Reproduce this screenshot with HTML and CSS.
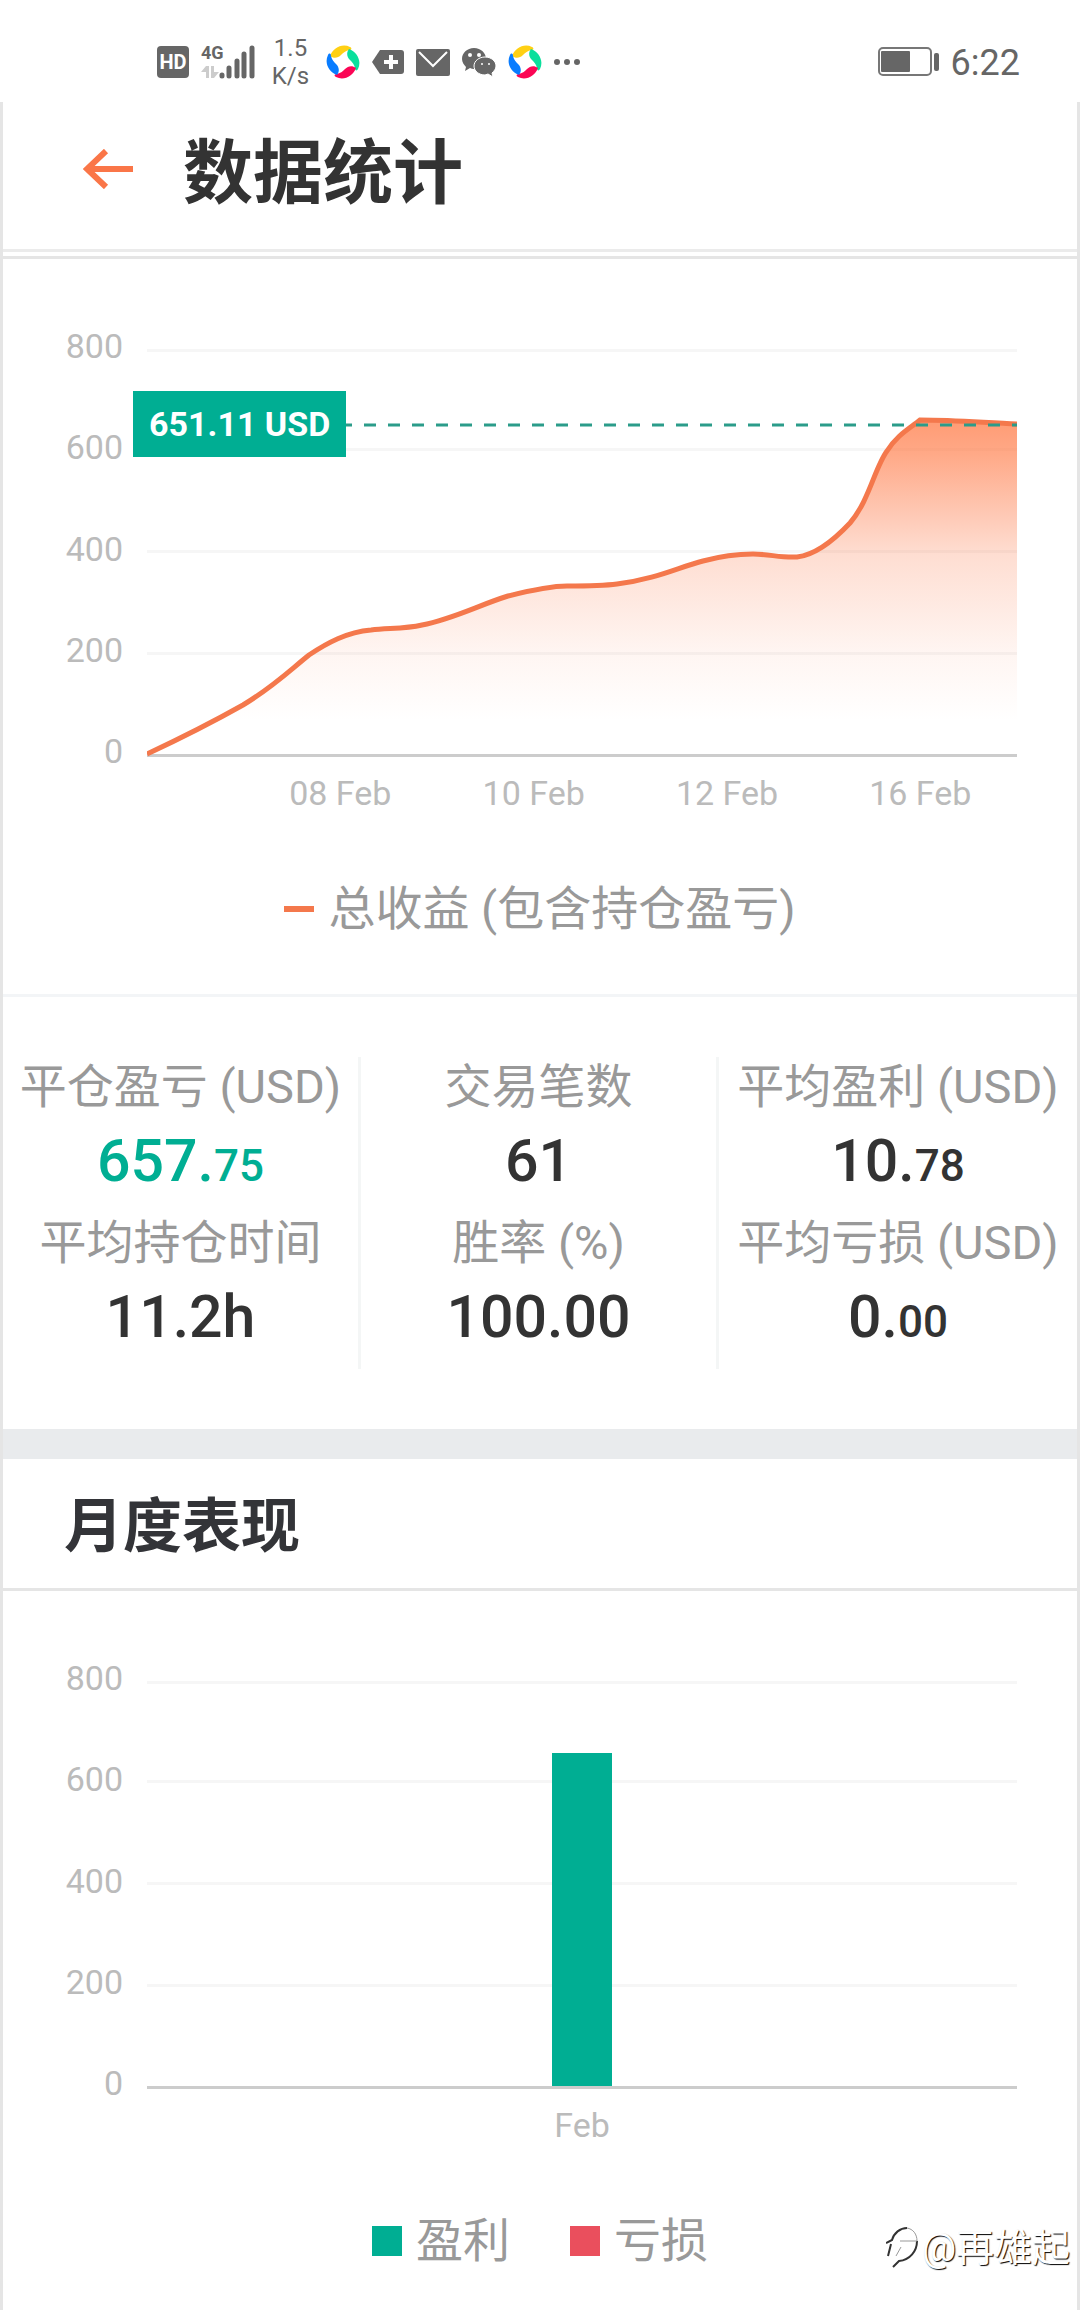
FILE: index.html
```html
<!DOCTYPE html>
<html lang="zh-CN">
<head>
  <meta charset="UTF-8" />
  <meta name="viewport" content="width=device-width, initial-scale=1.0"/>
  <title>数据统计</title>
  <link rel="stylesheet" href="styles.css">
</head>
<body>
  <svg width="0" height="0" class="sprite" aria-hidden="true">
    <symbol id="swirl" viewBox="0 0 36 36">
      <path fill="#ffd014" d="M5 12 C8 4 17 -1 25 3 C27 4 27 6 24 6 C20 7 18 9 16 11 C13 14 9 15 5 12 Z"/>
      <path fill="#0adf9c" d="M24 5 C32 8 37 17 33 25 C32 27 30 27 30 24 C29 20 27 18 25 16 C22 13 21 9 24 5 Z"/>
      <path fill="#fb0655" d="M31 24 C28 32 19 37 11 33 C9 32 9 30 12 30 C16 29 18 27 20 25 C23 22 27 21 31 24 Z"/>
      <path fill="#087cff" d="M12 31 C4 28 -1 19 3 11 C4 9 6 9 6 12 C7 16 9 18 11 20 C14 23 15 27 12 31 Z"/>
    </symbol>
  </svg>

  <div class="status-bar">
    <div class="status-left">
      <svg width="32" height="32" viewBox="0 0 32 32">
        <rect width="32" height="32" rx="4" fill="#666"/>
        <text x="16" y="23" text-anchor="middle" class="hd-text">HD</text>
      </svg>
      <svg width="54" height="46" viewBox="0 -6 54 46">
        <text x="0" y="14" class="net-text">4G</text>
        <path fill="#ccc" d="M0 27 L5 21 L8 21 L8 33 L5 33 L5 27 Z M10 21 L13 21 L13 27 L18 27 L13 33 L10 33 Z"/>
        <g stroke="#666" stroke-width="5" stroke-linecap="round">
          <path d="M21 30 V31 M28 23 V31 M36 16 V31 M43 9 V31 M51 3 V31"/>
        </g>
      </svg>
      <div class="speed">1.5<br>K/s</div>
      <svg class="app" width="36" height="36"><use href="#swirl"/></svg>
      <svg width="32" height="24" viewBox="0 0 32 24">
        <path fill="#666" d="M8 0 H29 Q32 0 32 3 V21 Q32 24 29 24 H8 L0 12 Z"/>
        <path stroke="#fff" stroke-width="4" d="M12 12 H26 M19 5 V19"/>
      </svg>
      <svg width="34" height="27" viewBox="0 0 34 27">
        <rect width="34" height="27" rx="2" fill="#666"/>
        <path fill="none" stroke="#fff" stroke-width="2" d="M3 3 L17 17 L31 3"/>
      </svg>
      <svg width="34" height="30" viewBox="0 0 34 30">
        <path fill="#666" d="M12 1 C5 1 0 6 0 12 C0 15 2 18 4 20 L3 24 L8 21 Q10 22 12 22 C19 22 24 17 24 12 C24 6 19 1 12 1 Z"/>
        <path fill="#666" stroke="#fff" stroke-width="1" d="M23 10 C17 10 12 14 12 19 C12 24 17 28 23 28 L26 27 L31 30 L30 26 C32 24 34 22 34 19 C34 14 29 10 23 10 Z"/>
        <g fill="#fff"><circle cx="8" cy="8" r="2"/><circle cx="17" cy="8" r="2"/><circle cx="20" cy="17" r="1"/><circle cx="27" cy="17" r="1"/></g>
      </svg>
      <svg class="app" width="36" height="36"><use href="#swirl"/></svg>
      <svg width="26" height="6" viewBox="0 0 26 6" fill="#666">
        <circle cx="3" cy="3" r="3"/><circle cx="13" cy="3" r="3"/><circle cx="23" cy="3" r="3"/>
      </svg>
    </div>
    <div class="status-right">
      <svg width="61" height="30" viewBox="0 0 61 30">
        <rect x="1" y="1" width="52" height="27" rx="4" fill="none" stroke="#777" stroke-width="2"/>
        <rect x="3" y="4" width="29" height="21" rx="1" fill="#666"/>
        <rect x="56" y="6" width="5" height="18" rx="2" fill="#666"/>
      </svg>
      <span class="clock">6:22</span>
    </div>
  </div>

  <main class="page">
    <header class="page-header">
      <button class="back-btn" aria-label="返回">
        <svg width="50" height="40" viewBox="0 0 50 40">
          <path fill="none" stroke="#fa7648" stroke-width="6" d="M50 20 H4 M23 2 L4 20 L23 38"/>
        </svg>
      </button>
      <h1>数据统计</h1>
    </header>

    <section class="profit">
      <div class="chart">
        <div class="y-axis">
          <span>800</span><span>600</span><span>400</span><span>200</span><span>0</span>
        </div>
        <div class="plot">
          <svg viewBox="0 0 870 408" preserveAspectRatio="none">
            <defs>
              <linearGradient id="fade" x1="0" y1="0" x2="0" y2="1">
                <stop offset="0" stop-color="#ff7843" stop-opacity="0.74"/>
                <stop offset="0.1" stop-color="#ff7843" stop-opacity="0.64"/>
                <stop offset="0.4" stop-color="#fb7848" stop-opacity="0.25"/>
                <stop offset="0.7" stop-color="#fb7848" stop-opacity="0.07"/>
                <stop offset="0.9" stop-color="#fb7848" stop-opacity="0"/>
              </linearGradient>
            </defs>
            <path class="grid-line" d="M0 0 H870 V3 H0 Z M0 99 H870 V102 H0 Z M0 201 H870 V204 H0 Z M0 303 H870 V306 H0 Z"/>
            <path fill="url(#fade)" d="M0 405 C32 390 64 374 96 356 C126 338 142 322 162 306 C180 294 200 283 224 281 C242 279 258 280 275 276 C306 270 332 256 361 247 C385 241 405 237 420 237 C440 237 455 237 470 235 C510 230 532 218 556 212 C578 206 592 205 606 205 C622 205 634 209 650 208 C668 206 688 190 703 174 C722 152 728 118 740 102 C750 86 762 80 773 71 C810 71 840 74 870 75 V405 Z"/>
            <path class="axis-line" d="M0 405 H870 V408 H0 Z"/>
            <path class="profit-line" d="M0 405 C32 390 64 374 96 356 C126 338 142 322 162 306 C180 294 200 283 224 281 C242 279 258 280 275 276 C306 270 332 256 361 247 C385 241 405 237 420 237 C440 237 455 237 470 235 C510 230 532 218 556 212 C578 206 592 205 606 205 C622 205 634 209 650 208 C668 206 688 190 703 174 C722 152 728 118 740 102 C750 86 762 80 773 71 C810 71 840 74 870 75"/>
            <path class="current-line" d="M1 76 H870"/>
          </svg>
          <div class="current-tag">651.11 USD</div>
          <div class="x-axis">
            <span>08 Feb</span><span>10 Feb</span><span>12 Feb</span><span>16 Feb</span>
          </div>
        </div>
      </div>
      <div class="legend">
        <span class="legend-item"><i class="dash"></i>总收益 (包含持仓盈亏)</span>
      </div>
    </section>

    <section class="stats">
      <dl>
        <dt>平仓盈亏 (USD)</dt>
        <dd class="win">657.<small>75</small></dd>
        <dt>平均持仓时间</dt>
        <dd>11.2h</dd>
      </dl>
      <dl>
        <dt>交易笔数</dt>
        <dd>61</dd>
        <dt>胜率 (%)</dt>
        <dd>100.00</dd>
      </dl>
      <dl>
        <dt>平均盈利 (USD)</dt>
        <dd>10.<small>78</small></dd>
        <dt>平均亏损 (USD)</dt>
        <dd>0.<small>00</small></dd>
      </dl>
    </section>

    <section class="monthly">
      <h2>月度表现</h2>
      <div class="chart">
        <div class="y-axis">
          <span>800</span><span>600</span><span>400</span><span>200</span><span>0</span>
        </div>
        <div class="plot">
          <svg viewBox="0 0 870 408" preserveAspectRatio="none">
            <path class="grid-line" d="M0 0 H870 V3 H0 Z M0 99 H870 V102 H0 Z M0 201 H870 V204 H0 Z M0 303 H870 V306 H0 Z"/>
            <rect x="405" y="72" width="60" height="333" fill="#00ae93"/>
            <path class="axis-line" d="M0 405 H870 V408 H0 Z"/>
          </svg>
          <div class="x-axis single"><span>Feb</span></div>
        </div>
      </div>
      <div class="legend">
        <span class="legend-item"><i class="box green"></i>盈利</span>
        <span class="legend-item"><i class="box red"></i>亏损</span>
      </div>
    </section>

    <div class="watermark">
      <svg width="36" height="42" viewBox="0 0 36 42" fill="none">
        <path stroke="#333" stroke-width="2" d="M0 16 L6 13 C8 6 14 1 21 1 M5 17 L2 29 M31 14 C31 24 24 33 13 34 L7 40"/>
        <path stroke="#999" stroke-width="1" d="M21 1 C27 2 31 7 31 14 H14 M15 20 L10 29"/>
      </svg>
      <span>@再雄起</span>
    </div>
  </main>
</body>
</html>
```
FILE: styles.css
```css
:root {
  --green: #00ae93;
  --red: #ea4f5d;
  --orange: #f4784c;
  --text: #333;
  --label: #999;
  --axis: #bbb;
  --line: #e5e5e5;
}

* {
  box-sizing: border-box;
}

body {
  margin: 0;
  min-height: 100vh;
  display: flex;
  flex-direction: column;
  font-family: Roboto, "Noto Sans CJK SC", sans-serif;
  color: var(--text);
  background: #fff;
}

h1, h2, dl, dd {
  margin: 0;
}

svg {
  display: block;
}

.sprite {
  position: absolute;
}

/* status bar */
.status-bar {
  height: 102px;
  padding: 22px 60px 0 157px;
  display: flex;
  justify-content: space-between;
  align-items: center;
  color: #666;
}

.status-left, .status-right {
  display: flex;
  align-items: center;
  gap: 12px;
}

.app {
  margin: 0 -1px;
}

.hd-text {
  font: 700 20px Roboto, sans-serif;
  fill: #fff;
}

.net-text {
  font: 700 18px Roboto, sans-serif;
  fill: #666;
}

.speed {
  width: 47px;
  text-align: center;
  font-size: 24px;
  line-height: 28px;
}

.clock {
  padding-top: 2px;
  font-size: 36px;
  line-height: 40px;
}

/* page */
.page {
  flex: 1;
  position: relative;
  border: solid var(--line);
  border-width: 0 3px;
}

.page-header {
  height: 150px;
  padding: 0 80px 14px;
  display: flex;
  align-items: center;
  gap: 50px;
  border-bottom: 3px solid #ebebeb;
}

.back-btn {
  padding: 0;
  border: none;
  background: none;
  cursor: pointer;
}

h1 {
  padding-top: 10px;
  font-size: 70px;
  line-height: 80px;
  font-weight: 700;
}

.profit {
  margin-top: 4px;
  padding-bottom: 55px;
  border-top: 3px solid var(--line);
  border-bottom: 3px solid #f3f5f7;
}

/* charts */
.chart {
  display: flex;
  padding: 69px 60px 0 0;
  font-size: 34px;
  line-height: 36px;
  color: var(--axis);
}

.y-axis {
  width: 144px;
  height: 441px;
  padding-right: 24px;
  display: flex;
  flex-direction: column;
  justify-content: space-between;
  text-align: right;
}

.plot {
  flex: 1;
  position: relative;
  padding-top: 21px;
}

.plot svg {
  width: 100%;
  height: 408px;
}

.grid-line {
  fill: #f6f6f6;
}

.axis-line {
  fill: #ccc;
}

.profit-line {
  fill: none;
  stroke: var(--orange);
  stroke-width: 5;
}

.current-line {
  stroke: #2b9c8a;
  stroke-width: 3;
  stroke-dasharray: 12 12;
}

.current-tag {
  position: absolute;
  top: 63px;
  left: -14px;
  padding: 0 16px;
  line-height: 66px;
  font-weight: 700;
  color: #fff;
  background: var(--green);
}

.x-axis {
  margin-top: 18px;
  display: grid;
  grid-template-columns: repeat(9, 1fr);
  text-align: center;
}

.x-axis span {
  grid-column: span 2;
}

.x-axis span:first-child {
  grid-column: 2 / span 2;
}

.x-axis.single {
  display: block;
}

.legend {
  margin-top: 68px;
  display: flex;
  justify-content: center;
  gap: 60px;
  font-size: 47px;
  line-height: 60px;
  color: var(--label);
}

.legend-item {
  display: flex;
  align-items: center;
  gap: 14px;
}

.dash {
  width: 30px;
  height: 6px;
  background: var(--orange);
}

.box {
  width: 30px;
  height: 30px;
}

.green {
  background: var(--green);
}

.red {
  background: var(--red);
}

/* stats */
.stats {
  display: grid;
  grid-template-columns: repeat(3, 1fr);
  padding: 60px 0;
  text-align: center;
}

.stats dl {
  border-right: 3px solid #f4f6f6;
}

.stats dl:last-child {
  border-right: none;
}

.stats dt {
  font-size: 47px;
  line-height: 60px;
  color: var(--label);
  white-space: nowrap;
}

.stats dd {
  margin-bottom: 8px;
  font-size: 59px;
  line-height: 88px;
  font-weight: 500;
}

.stats small {
  font-size: 44px;
  line-height: 44px;
}

.stats .win {
  color: var(--green);
}

/* monthly */
.monthly {
  border-top: 30px solid #e9ebed;
}

h2 {
  padding: 6px 0 0 61px;
  font-size: 59px;
  line-height: 123px;
  font-weight: 700;
  color: #333438;
  border-bottom: 3px solid var(--line);
}

.watermark {
  position: absolute;
  right: 7px;
  bottom: 38px;
  display: flex;
  align-items: center;
  font-size: 38px;
  line-height: 48px;
  color: #fff;
  text-shadow: 1px 1px 1px #000;
}
```
